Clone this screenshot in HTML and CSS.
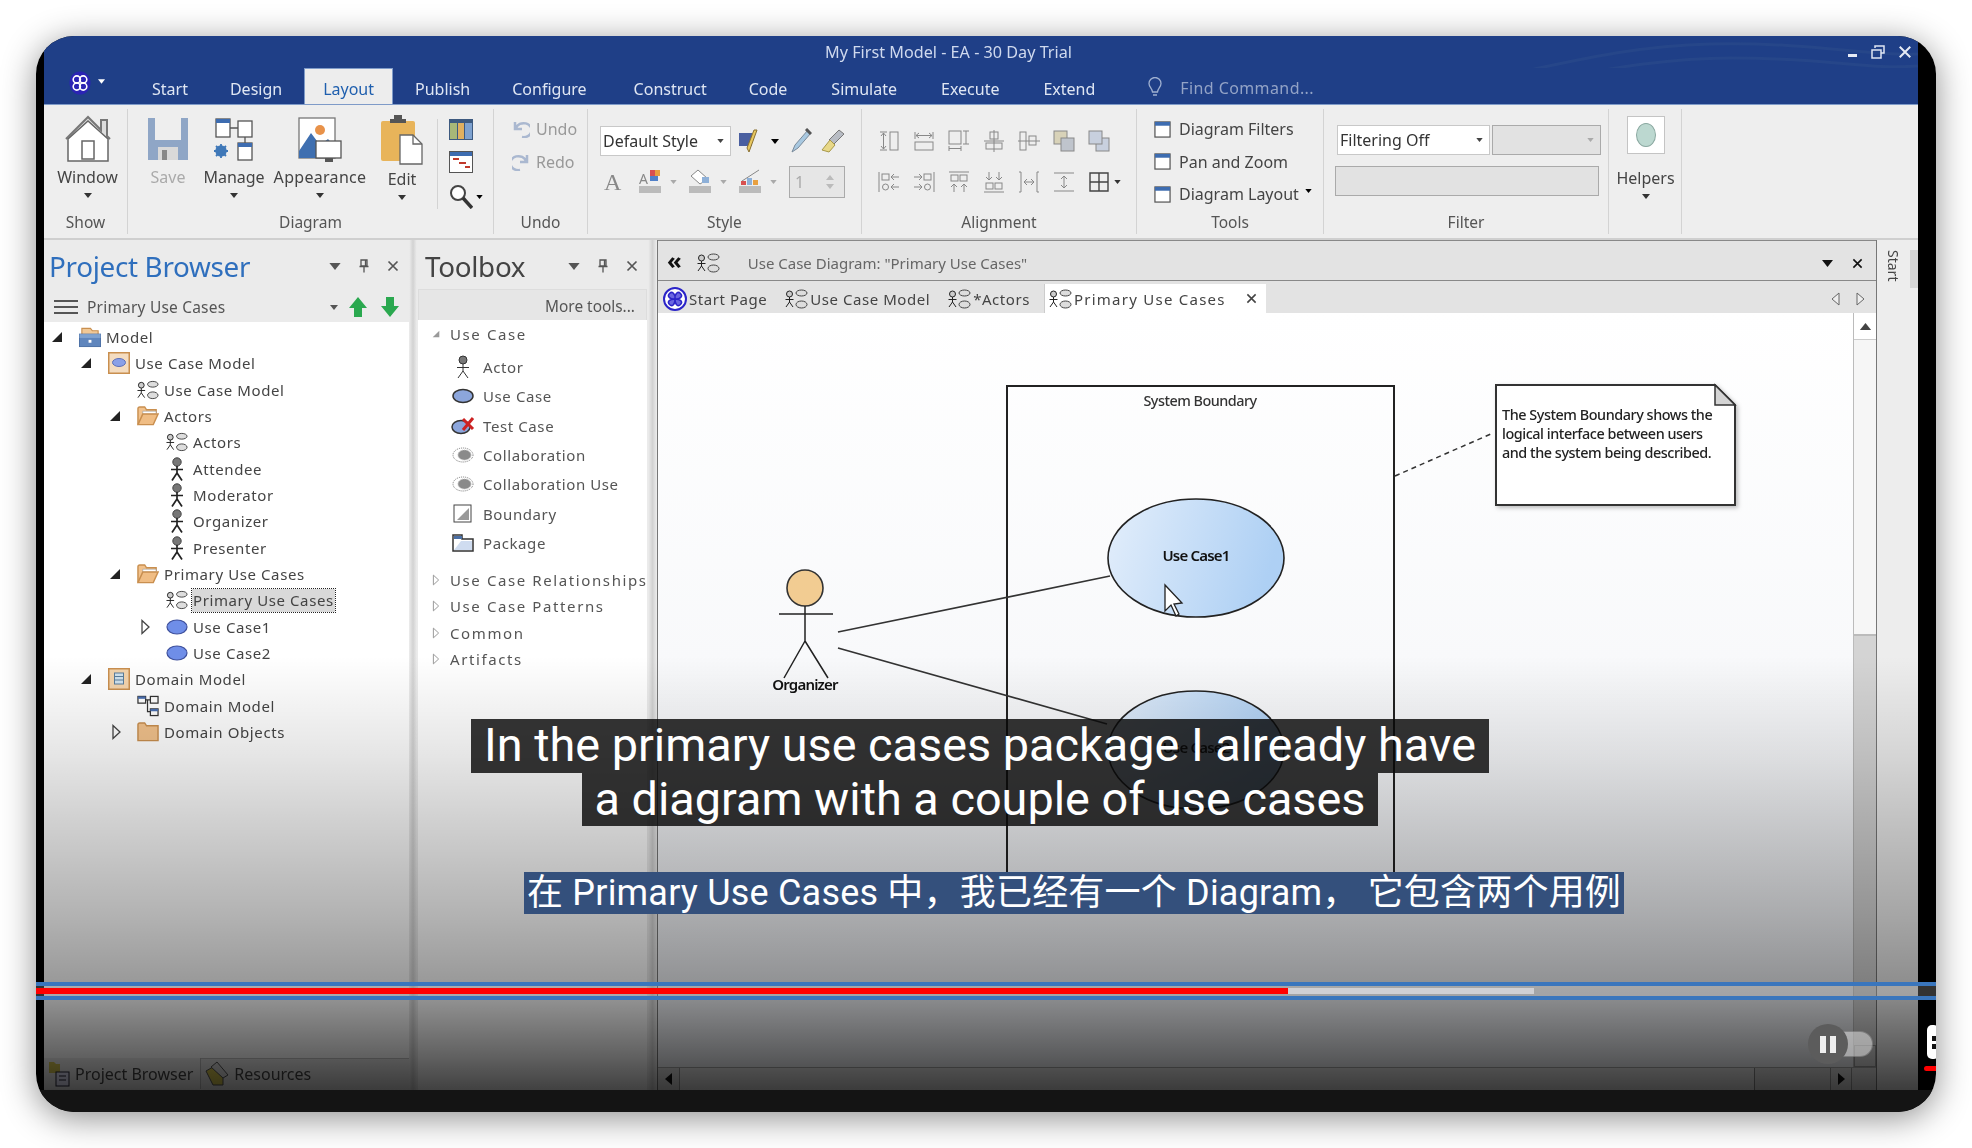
FILE: index.html
```html
<!DOCTYPE html>
<html lang="en">
<head>
    <meta charset="UTF-8">
    <title>My First Model - EA - 30 Day Trial</title>
    <link rel="stylesheet" href="styles.css">
</head>
<body>
<svg class="defs" width="0" height="0">
    <defs>
        <linearGradient id="ucfill" x1="0" x2="1" y1="0" y2="0.2">
            <stop offset="0" stop-color="#e3eefb"/>
            <stop offset="1" stop-color="#aed0f4"/>
        </linearGradient>
        <symbol id="i-actor" viewBox="0 0 14 24">
            <circle cx="7" cy="5" r="4.200" fill="#777" stroke="#444"/>
            <path d="M7 9V16M1 12.500H13M7 16L2 23.500M7 16L12 23.500" stroke="#222" stroke-width="1.700" fill="none"/>
        </symbol>
        <symbol id="i-actor-thin" viewBox="0 0 14 24">
            <circle cx="7" cy="5" r="4" fill="#777" stroke="#333"/>
            <path d="M7 9V16M1 12.500H13M7 16L2 23M7 16L12 23" stroke="#333" fill="none"/>
        </symbol>
        <symbol id="i-ucd" viewBox="0 0 23 20">
            <circle cx="4.500" cy="5" r="3" fill="#ccc" stroke="#222"/>
            <path d="M4.500 8V13M0.500 10.500H8.500M4.500 13L1 18M4.500 13L8 18" stroke="#222" fill="none"/>
            <ellipse cx="16.500" cy="4" rx="5.500" ry="3" fill="#ddd" stroke="#444"/>
            <ellipse cx="16.500" cy="15.500" rx="5.500" ry="3.500" fill="#ddd" stroke="#444"/>
        </symbol>
        <symbol id="i-open" viewBox="0 0 23 22">
            <path d="M1 20V3.500Q1 1.500 3 1.500H8L10 4.500H20V8" fill="#f2c28c" stroke="#c98f4f" stroke-width="1.500"/>
            <path d="M6 6H20V9H6z" fill="#fff" stroke="#999" stroke-width=".6"/>
            <path d="M1 20L6 9H22L17 20z" fill="#f0bd84" stroke="#c98f4f" stroke-width="1.500"/>
        </symbol>
        <symbol id="i-folder" viewBox="0 0 23 22">
            <path d="M1 20V3.500Q1 1.500 3 1.500H8L10 4.500H22V20z" fill="#f2c28c" stroke="#c98f4f" stroke-width="1.500"/>
        </symbol>
        <symbol id="i-model" viewBox="0 0 23 22">
            <path d="M3 8V2H12L14 4.500H20V8" fill="#f0c896" stroke="#c98f4f" stroke-width="1.200"/>
            <rect x="0.500" y="8" width="22" height="13" fill="#5f86bd" stroke="#4a6fa5"/>
            <rect x="0.500" y="8" width="22" height="4" fill="#7ea2d0"/>
            <rect x="10" y="14" width="3" height="3" fill="#fff"/>
        </symbol>
        <symbol id="i-pkg-uc" viewBox="0 0 22 22">
            <rect x="0.750" y="0.750" width="20.500" height="20.500" fill="#f4dcc0" stroke="#c98f4f" stroke-width="1.500"/>
            <ellipse cx="11" cy="10.500" rx="6.500" ry="4" fill="#8aa0e8" stroke="#5d70b8"/>
        </symbol>
        <symbol id="i-pkg-dm" viewBox="0 0 22 22">
            <rect x="0.750" y="0.750" width="20.500" height="20.500" fill="#f4d4ac" stroke="#c98f4f" stroke-width="1.500"/>
            <rect x="6.500" y="5" width="9" height="11" fill="#cfe2ee" stroke="#5a7d9a"/>
            <path d="M6.500 8.500H15.500M6.500 12H15.500" stroke="#5a7d9a"/>
        </symbol>
        <symbol id="i-dmd" viewBox="0 0 23 22">
            <rect x="1" y="1" width="8" height="7" fill="#fff" stroke="#333" stroke-width="1.300"/>
            <rect x="1" y="1" width="8" height="2.500" fill="#4a6fb0"/>
            <rect x="14" y="1" width="8" height="7" fill="#fff" stroke="#333" stroke-width="1.300"/>
            <rect x="14" y="14" width="8" height="7" fill="#fff" stroke="#333" stroke-width="1.300"/>
            <rect x="14" y="14" width="8" height="2.500" fill="#4a6fb0"/>
            <path d="M9 4.500H14M11 4.500V17H14" stroke="#333" fill="none" stroke-width="1.300"/>
        </symbol>
        <symbol id="i-uc" viewBox="0 0 22 16">
            <ellipse cx="11" cy="8" rx="10" ry="7" fill="#6f8ee8" stroke="#3d4f9c" stroke-width="1.200"/>
        </symbol>
        <symbol id="i-collab" viewBox="0 0 22 16">
            <ellipse cx="11" cy="8" rx="10" ry="7" fill="#fff" stroke="#777" stroke-dasharray="1 1"/>
            <ellipse cx="12.500" cy="8" rx="6.500" ry="5" fill="#8a8a8a" stroke="#bbb" stroke-dasharray="1 1"/>
        </symbol>
        <symbol id="i-win" viewBox="0 0 18 18">
            <rect x="1" y="1" width="16" height="16" fill="#fff" stroke="#555" stroke-width="1.300"/>
            <rect x="1" y="1" width="16" height="4" fill="#3d6cb0"/>
        </symbol>
        <symbol id="i-logo" viewBox="0 0 22 24">
            <ellipse cx="11" cy="12" rx="10.500" ry="11.500" fill="#2b24b4"/>
            <circle cx="7.800" cy="8.500" r="3.600" fill="none" stroke="#fff" stroke-width="1.600"/>
            <circle cx="14.200" cy="8.500" r="3.600" fill="none" stroke="#fff" stroke-width="1.600"/>
            <circle cx="7.800" cy="15.500" r="3.600" fill="none" stroke="#fff" stroke-width="1.600"/>
            <circle cx="14.200" cy="15.500" r="3.600" fill="none" stroke="#fff" stroke-width="1.600"/>
        </symbol>
        <symbol id="i-start" viewBox="0 0 24 24">
            <circle cx="12" cy="12" r="11" fill="#fff" stroke="#2b24c8" stroke-width="2"/>
            <path d="M12 12C6 12 4 9 6.500 6.500C9 4 12 6 12 12C12 6 15 4 17.500 6.500C20 9 18 12 12 12C18 12 20 15 17.500 17.500C15 20 12 18 12 12C12 18 9 20 6.500 17.500C4 15 6 12 12 12z" fill="#6a66e0" stroke="#2b24c8" stroke-width="1.500"/>
        </symbol>
        <symbol id="i-caret" viewBox="0 0 8 5">
            <path d="M0 0H8L4 5z"/>
        </symbol>
        <symbol id="i-open-tri" viewBox="0 0 12 12">
            <path d="M11 1V11H1z" fill="#222"/>
        </symbol>
        <symbol id="i-closed-tri" viewBox="0 0 10 16">
            <path d="M1.500 1.500L8.500 8L1.500 14.500z" fill="#fff" stroke="#444" stroke-width="1.300"/>
        </symbol>
        <symbol id="i-pin" viewBox="0 0 10 14">
            <path d="M2 1H8V7H2zM0.500 7.500H9.500M5 8V13.500M6.500 1V7" fill="none" stroke="currentColor" stroke-width="1.300"/>
        </symbol>
        <symbol id="i-x" viewBox="0 0 12 12">
            <path d="M1.500 1.500L10.500 10.500M10.500 1.500L1.500 10.500" stroke="currentColor" stroke-width="1.700"/>
        </symbol>
        <symbol id="al1" viewBox="0 0 22 22"><path d="M2 2H9M2 20H9M5.500 3V19M3 6L5.500 3L8 6M3 16L5.500 19L8 16" fill="none" stroke="#888"/><rect x="12" y="2" width="8" height="18" fill="none" stroke="#888"/></symbol>
        <symbol id="al2" viewBox="0 0 22 22"><path d="M2 2V9M20 2V9M3 5.500H19M6 3L3 5.500L6 8M16 3L19 5.500L16 8" fill="none" stroke="#888"/><rect x="2" y="12" width="18" height="8" fill="none" stroke="#888"/></symbol>
        <symbol id="al3" viewBox="0 0 22 22"><rect x="1" y="1" width="12" height="13" fill="none" stroke="#888"/><path d="M15 1H21M18 1V14M15 14H21M1 16V21M13 16V21M1 18.500H13" fill="none" stroke="#888"/></symbol>
        <symbol id="al4" viewBox="0 0 22 22"><rect x="7" y="2" width="8" height="7" fill="none" stroke="#888"/><rect x="3" y="13" width="16" height="6" fill="none" stroke="#888"/><path d="M1 11H21M11 0V22" fill="none" stroke="#888"/></symbol>
        <symbol id="al5" viewBox="0 0 22 22"><rect x="2" y="2" width="6" height="18" fill="none" stroke="#888"/><rect x="11" y="6" width="7" height="9" fill="none" stroke="#888"/><path d="M0 11H22" stroke="#888"/></symbol>
        <symbol id="al6" viewBox="0 0 22 22"><rect x="1" y="1" width="13" height="13" fill="#d8d2b8" stroke="#888"/><rect x="8" y="8" width="13" height="13" fill="#bfc4cc" stroke="#888"/></symbol>
        <symbol id="al7" viewBox="0 0 22 22"><rect x="8" y="8" width="13" height="13" fill="#c8d0de" stroke="#888"/><rect x="1" y="1" width="13" height="13" fill="#c8d0de" stroke="#888"/></symbol>
        <symbol id="al8" viewBox="0 0 22 22"><path d="M1 1V21" stroke="#888"/><rect x="4" y="3" width="7" height="6" fill="none" stroke="#888"/><circle cx="7.500" cy="16" r="3" fill="none" stroke="#888"/><path d="M21 6H13M16 3L13 6L16 9M21 16H13M16 13L13 16L16 19" fill="none" stroke="#888"/></symbol>
        <symbol id="al9" viewBox="0 0 22 22"><path d="M21 1V21" stroke="#888"/><rect x="11" y="3" width="7" height="6" fill="none" stroke="#888"/><circle cx="14.500" cy="16" r="3" fill="none" stroke="#888"/><path d="M1 6H9M6 3L9 6L6 9M1 16H9M6 13L9 16L6 19" fill="none" stroke="#888"/></symbol>
        <symbol id="al10" viewBox="0 0 22 22"><path d="M1 1H21" stroke="#888"/><rect x="3" y="4" width="7" height="6" fill="none" stroke="#888"/><rect x="12" y="4" width="7" height="6" fill="none" stroke="#888"/><path d="M6 21V13M3 16L6 13L9 16M16 21V13M13 16L16 13L19 16" fill="none" stroke="#888"/></symbol>
        <symbol id="al11" viewBox="0 0 22 22"><path d="M1 21H21" stroke="#888"/><rect x="3" y="12" width="7" height="6" fill="none" stroke="#888"/><rect x="12" y="12" width="7" height="6" fill="none" stroke="#888"/><path d="M6 1V9M3 6L6 9L9 6M16 1V9M13 6L16 9L19 6" fill="none" stroke="#888"/></symbol>
        <symbol id="al12" viewBox="0 0 22 22"><path d="M3 1V21M19 1V21M6 11H16M9 8L6 11L9 14M13 8L16 11L13 14M1 1H3M1 21H3M19 1H21M19 21H21" fill="none" stroke="#888"/></symbol>
        <symbol id="al13" viewBox="0 0 22 22"><path d="M1 2H21M1 20H21M11 5V17M8 8L11 5L14 8M8 14L11 17L14 14" fill="none" stroke="#888"/></symbol>
    </defs>
</svg>

<div class="frame">
    <div class="app">
        <div class="titlebar">
            <svg class="waves" viewBox="0 0 500 68" preserveAspectRatio="none">
                <path d="M0 60C120 40 200 10 300 8S450 20 500 18M0 66C140 50 220 22 320 22S450 34 500 30M60 68C180 52 240 36 340 36S450 46 500 44" fill="none" stroke="#264689" stroke-width="3"/>
            </svg>
            <span class="wintitle">My First Model - EA - 30 Day Trial</span>
            <span class="winbtn min"></span>
            <svg class="winbtn" width="14" height="14" viewBox="0 0 14 14"><path d="M4 3V1H13V8H10M1 5H10V13H1z" fill="none" stroke="#dfe6f3" stroke-width="1.500"/></svg>
            <svg class="winbtn last" width="14" height="14"><use href="#i-x" color="#e6ebf5"/></svg>
        </div>
        <div class="menu">
            <svg class="logo" width="22" height="24"><use href="#i-logo"/></svg>
            <svg class="logo-caret" width="7" height="5"><use href="#i-caret" fill="#fff"/></svg>
            <span class="tab">Start</span>
            <span class="tab">Design</span>
            <span class="tab active">Layout</span>
            <span class="tab">Publish</span>
            <span class="tab wide">Configure</span>
            <span class="tab">Construct</span>
            <span class="tab gap">Code</span>
            <span class="tab gap">Simulate</span>
            <span class="tab gap">Execute</span>
            <span class="tab">Extend</span>
            <svg class="bulb" width="14" height="20" viewBox="0 0 14 20"><path d="M4.500 15C4 11 1 10 1 6.500A6 6 0 0 1 13 6.500C13 10 10 11 9.500 15zM5 18H9" fill="none" stroke="#9fb0d0" stroke-width="1.300"/></svg>
            <span class="find">Find Command...</span>
        </div>

        <div class="ribbon">
            <div class="group g-show">
                <div class="bigs">
                    <div class="big b-window">
                        <svg width="46" height="48" viewBox="0 0 46 48">
                            <path d="M1 24L23 2L36 15V5H42V21L45 24" fill="#ddd" stroke="#777" stroke-width="2"/>
                            <path d="M3 24L23 6L43 24V46H3z" fill="#fff" stroke="#666" stroke-width="1.500"/>
                            <rect x="17" y="26" width="12" height="18" fill="#fff" stroke="#666" stroke-width="1.500"/>
                        </svg>
                        <span>Window</span>
                        <svg class="bc" width="8" height="5"><use href="#i-caret"/></svg>
                    </div>
                </div>
                <div class="glabel">Show</div>
            </div>
            <div class="group g-diagram">
                <div class="bigs">
                    <div class="big b-save dim">
                        <svg width="42" height="48" viewBox="0 0 42 48">
                            <path d="M1 3H41V45H1z" fill="#8fa6c6"/>
                            <rect x="8" y="3" width="26" height="22" fill="#eee"/>
                            <rect x="11" y="32" width="20" height="13" fill="#d9d9d9"/>
                            <rect x="15" y="35" width="5" height="10" fill="#888"/>
                        </svg>
                        <span>Save</span>
                    </div>
                    <div class="big b-manage">
                        <svg width="42" height="48" viewBox="0 0 42 48">
                            <rect x="3" y="4" width="14" height="18" fill="#fff" stroke="#555" stroke-width="1.300"/>
                            <rect x="3" y="4" width="14" height="4" fill="#3d6cb0"/>
                            <rect x="25" y="6" width="14" height="16" fill="#fff" stroke="#555" stroke-width="1.300"/>
                            <path d="M17 13H25M32 22V28" stroke="#555" stroke-width="1.300"/>
                            <rect x="25" y="28" width="14" height="17" fill="#fff" stroke="#555" stroke-width="1.300"/>
                            <rect x="25" y="28" width="14" height="4" fill="#3d6cb0"/>
                            <circle cx="8" cy="36" r="4" fill="none" stroke="#3f78b8" stroke-width="3.500"/>
                            <path d="M8 29V43M1 36H15M3 31L13 41M13 31L3 41" stroke="#3f78b8" stroke-width="1.800"/>
                        </svg>
                        <span>Manage</span>
                        <svg class="bc" width="8" height="5"><use href="#i-caret"/></svg>
                    </div>
                    <div class="big b-appear">
                        <svg width="44" height="48" viewBox="0 0 44 48">
                            <rect x="1" y="3" width="36" height="40" fill="#fff" stroke="#777" stroke-width="1.300"/>
                            <circle cx="22" cy="15" r="5" fill="#e8924a"/>
                            <path d="M1 36L13 18L22 30L30 24L37 32V43H1z" fill="#3f6fb0"/>
                            <rect x="18" y="26" width="25" height="17" fill="#fff" stroke="#555" stroke-width="1.300"/>
                            <path d="M27 43H35V47H27z" fill="#555"/>
                        </svg>
                        <span>Appearance</span>
                        <svg class="bc" width="8" height="5"><use href="#i-caret"/></svg>
                    </div>
                    <div class="big b-edit">
                        <svg width="44" height="50" viewBox="0 0 44 50">
                            <rect x="1" y="6" width="34" height="40" rx="2" fill="#e8b45a"/>
                            <path d="M10 8V4H14V0H22V4H26V8z" fill="#555"/>
                            <path d="M20 20H33L42 29V49H20z" fill="#fff" stroke="#666" stroke-width="1.300"/>
                            <path d="M33 20V29H42" fill="none" stroke="#666" stroke-width="1.300"/>
                        </svg>
                        <span>Edit</span>
                        <svg class="bc" width="8" height="5"><use href="#i-caret"/></svg>
                    </div>
                    <div class="minis">
                        <svg width="24" height="21" viewBox="0 0 24 21">
                            <rect width="24" height="21" fill="#3d5a80"/>
                            <rect x="1" y="4" width="7" height="16" fill="#a8b878"/>
                            <rect x="9" y="4" width="6" height="16" fill="#e0b060"/>
                            <rect x="16" y="4" width="7" height="16" fill="#7ea2d0"/>
                        </svg>
                        <svg width="24" height="22" viewBox="0 0 24 22">
                            <rect x=".5" y=".5" width="23" height="21" fill="#fff" stroke="#555"/>
                            <rect x="1" y="1" width="22" height="4" fill="#3d6cb0"/>
                            <path d="M4 8H10M10 12H17M16 16H21" stroke="#c0392b" stroke-width="2"/>
                        </svg>
                        <div class="zoomico">
                            <svg width="24" height="25" viewBox="0 0 24 25"><circle cx="9" cy="9" r="7" fill="#fff" stroke="#444" stroke-width="2"/><path d="M14 14L23 24" stroke="#333" stroke-width="3.500"/></svg>
                            <svg width="7" height="4"><use href="#i-caret"/></svg>
                        </div>
                    </div>
                </div>
                <div class="glabel">Diagram</div>
            </div>
            <div class="group g-undo">
                <div class="rows tall">
                    <div class="urow"><svg width="18" height="18" viewBox="0 0 18 18"><path d="M3 2V9H10M4 8A8 7 0 1 1 10 17" fill="none" stroke="#aab8d0" stroke-width="2.500"/></svg><span>Undo</span></div>
                    <div class="urow"><svg width="18" height="18" viewBox="0 0 18 18"><path d="M15 2V9H8M14 8A8 7 0 1 0 8 17" fill="none" stroke="#aab8d0" stroke-width="2.500"/></svg><span>Redo</span></div>
                </div>
                <div class="glabel">Undo</div>
            </div>
            <div class="group g-style">
                <div class="rows">
                    <div class="srow">
                        <div class="combo c-style"><span>Default Style</span><svg width="7" height="4"><use href="#i-caret"/></svg></div>
                        <svg width="22" height="26" viewBox="0 0 22 26"><rect x="1" y="5" width="13" height="13" fill="#4a5fa0"/><path d="M19 2L11 24L9 20L16 2z" fill="#e8c860" stroke="#8a7030"/></svg>
                        <svg class="tc" width="8" height="5"><use href="#i-caret"/></svg>
                        <svg class="tw" width="22" height="26" viewBox="0 0 22 26"><path d="M18 2L21 5L8 20L2 24L5 17z" fill="#a8c8e0" stroke="#7a8a9a"/><path d="M16 1L21 6" stroke="#555" stroke-width="3"/></svg>
                        <svg class="tw" width="24" height="26" viewBox="0 0 24 26"><path d="M18 2L23 6L13 16L8 12z" fill="#b8bcc4" stroke="#777"/><path d="M9 12L14 17L8 24L1 22z" fill="#e8d888" stroke="#a89848"/></svg>
                    </div>
                    <div class="srow second">
                        <span class="bigA">A</span>
                        <svg class="pa" width="22" height="26" viewBox="0 0 22 26"><text x="0" y="15" font-family="Noto Sans" font-size="14" fill="#888">A</text><rect x="11" y="1" width="5" height="6" fill="#d85050"/><rect x="16" y="1" width="5" height="6" fill="#e8a040"/><rect x="11" y="7" width="8" height="5" fill="#5080c8"/><rect y="17" width="22" height="7" fill="#bbb"/></svg>
                        <svg class="tc lite" width="7" height="4"><use href="#i-caret"/></svg>
                        <svg class="pa" width="22" height="26" viewBox="0 0 22 26"><path d="M9 1L19 10L11 15L2 7z" fill="#fff" stroke="#888"/><rect x="13" y="8" width="7" height="6" fill="#8eb0d8"/><rect y="17" width="22" height="7" fill="#bbb"/></svg>
                        <svg class="tc lite" width="7" height="4"><use href="#i-caret"/></svg>
                        <svg class="pa" width="22" height="26" viewBox="0 0 22 26"><path d="M3 12L20 1" stroke="#888"/><rect x="2" y="12" width="5" height="4" fill="#d85050"/><rect x="8" y="9" width="5" height="7" fill="#8eb0d8"/><rect x="14" y="11" width="5" height="5" fill="#e8a040"/><rect y="17" width="22" height="7" fill="#bbb"/></svg>
                        <svg class="tc lite" width="7" height="4"><use href="#i-caret"/></svg>
                        <div class="spin"><span>1</span><i class="up"></i><i class="down"></i></div>
                    </div>
                </div>
                <div class="glabel">Style</div>
            </div>
            <div class="group g-align">
                <div class="rows">
                    <div class="srow alrow">
                        <svg width="22" height="22"><use href="#al1"/></svg>
                        <svg width="22" height="22"><use href="#al2"/></svg>
                        <svg width="22" height="22"><use href="#al3"/></svg>
                        <svg width="22" height="22"><use href="#al4"/></svg>
                        <svg width="22" height="22"><use href="#al5"/></svg>
                        <svg width="22" height="22"><use href="#al6"/></svg>
                        <svg width="22" height="22"><use href="#al7"/></svg>
                    </div>
                    <div class="srow second alrow">
                        <svg width="22" height="22"><use href="#al8"/></svg>
                        <svg width="22" height="22"><use href="#al9"/></svg>
                        <svg width="22" height="22"><use href="#al10"/></svg>
                        <svg width="22" height="22"><use href="#al11"/></svg>
                        <svg width="22" height="22"><use href="#al12"/></svg>
                        <svg width="22" height="22"><use href="#al13"/></svg>
                        <div class="gridico">
                            <svg width="20" height="20" viewBox="0 0 20 20"><path d="M1 1H19V19H1zM10 1V19M1 10H19" fill="none" stroke="#444" stroke-width="1.400"/></svg>
                            <svg width="7" height="4"><use href="#i-caret"/></svg>
                        </div>
                    </div>
                </div>
                <div class="glabel">Alignment</div>
            </div>
            <div class="group g-tools">
                <div class="rows tall">
                    <div class="urow"><svg width="17" height="17"><use href="#i-win"/></svg><span>Diagram Filters</span></div>
                    <div class="urow"><svg width="17" height="17"><use href="#i-win"/></svg><span>Pan and Zoom</span></div>
                    <div class="urow"><svg width="17" height="17"><use href="#i-win"/></svg><span>Diagram Layout</span><svg class="lc" width="7" height="4"><use href="#i-caret"/></svg></div>
                </div>
                <div class="glabel">Tools</div>
            </div>
            <div class="group g-filter">
                <div class="rows">
                    <div class="srow">
                        <div class="combo c-filter"><span>Filtering Off</span><svg width="7" height="4"><use href="#i-caret"/></svg></div>
                        <div class="combo c-off"><svg width="7" height="4"><use href="#i-caret" fill="#aaa"/></svg></div>
                    </div>
                    <div class="srow second"><div class="combo c-text"></div></div>
                </div>
                <div class="glabel">Filter</div>
            </div>
            <div class="group g-help">
                <div class="big b-help">
                    <div class="helpbox"><i></i></div>
                    <span>Helpers</span>
                    <svg class="bc" width="8" height="5"><use href="#i-caret"/></svg>
                </div>
            </div>
        </div>

        <div class="work">
            <div class="panel browser">
                <div class="phead">
                    <span class="ptitle blue">Project Browser</span>
                    <svg class="pc" width="12" height="7"><use href="#i-caret" fill="#555"/></svg>
                    <svg class="pp" width="10" height="14"><use href="#i-pin" color="#555"/></svg>
                    <svg class="px" width="12" height="12"><use href="#i-x" color="#555"/></svg>
                </div>
                <div class="pbar">
                    <svg width="24" height="16" viewBox="0 0 24 16"><path d="M0 2H24M0 8H24M0 14H24" stroke="#555" stroke-width="2"/></svg>
                    <span class="crumb">Primary Use Cases</span>
                    <svg class="cc" width="8" height="5"><use href="#i-caret" fill="#555"/></svg>
                    <svg class="arrow" width="20" height="22" viewBox="0 0 20 22"><path d="M10 1L19 12H14V21H6V12H1z" fill="#2aa84f"/></svg>
                    <svg class="arrow" width="20" height="22" viewBox="0 0 20 22"><path d="M10 21L19 10H14V1H6V10H1z" fill="#2aa84f"/></svg>
                </div>
                <div class="tree">
                    <div class="row"><svg class="tri" width="12" height="12"><use href="#i-open-tri"/></svg><svg class="ic" width="22" height="22"><use href="#i-model"/></svg><span>Model</span></div>
                    <div class="row lv1"><svg class="tri" width="12" height="12"><use href="#i-open-tri"/></svg><svg class="ic" width="22" height="22"><use href="#i-pkg-uc"/></svg><span>Use Case Model</span></div>
                    <div class="row lv2"><i class="tri"></i><svg class="ic" width="22" height="20"><use href="#i-ucd"/></svg><span>Use Case Model</span></div>
                    <div class="row lv2"><svg class="tri" width="12" height="12"><use href="#i-open-tri"/></svg><svg class="ic" width="22" height="22"><use href="#i-open"/></svg><span>Actors</span></div>
                    <div class="row lv3"><i class="tri"></i><svg class="ic" width="22" height="20"><use href="#i-ucd"/></svg><span>Actors</span></div>
                    <div class="row lv3"><i class="tri"></i><svg class="ic" width="22" height="24"><use href="#i-actor"/></svg><span>Attendee</span></div>
                    <div class="row lv3"><i class="tri"></i><svg class="ic" width="22" height="24"><use href="#i-actor"/></svg><span>Moderator</span></div>
                    <div class="row lv3"><i class="tri"></i><svg class="ic" width="22" height="24"><use href="#i-actor"/></svg><span>Organizer</span></div>
                    <div class="row lv3"><i class="tri"></i><svg class="ic" width="22" height="24"><use href="#i-actor"/></svg><span>Presenter</span></div>
                    <div class="row lv2"><svg class="tri" width="12" height="12"><use href="#i-open-tri"/></svg><svg class="ic" width="22" height="22"><use href="#i-open"/></svg><span>Primary Use Cases</span></div>
                    <div class="row lv3"><i class="tri"></i><svg class="ic" width="22" height="20"><use href="#i-ucd"/></svg><span class="sel">Primary Use Cases</span></div>
                    <div class="row lv3"><svg class="tri cl" width="10" height="16"><use href="#i-closed-tri"/></svg><svg class="ic" width="22" height="16"><use href="#i-uc"/></svg><span>Use Case1</span></div>
                    <div class="row lv3"><i class="tri"></i><svg class="ic" width="22" height="16"><use href="#i-uc"/></svg><span>Use Case2</span></div>
                    <div class="row lv1"><svg class="tri" width="12" height="12"><use href="#i-open-tri"/></svg><svg class="ic" width="22" height="22"><use href="#i-pkg-dm"/></svg><span>Domain Model</span></div>
                    <div class="row lv2"><i class="tri"></i><svg class="ic" width="22" height="22"><use href="#i-dmd"/></svg><span>Domain Model</span></div>
                    <div class="row lv2"><svg class="tri cl" width="10" height="16"><use href="#i-closed-tri"/></svg><svg class="ic" width="22" height="22"><use href="#i-folder"/></svg><span>Domain Objects</span></div>
                </div>
                <div class="ptabs">
                    <div class="ptab on">
                        <svg width="22" height="26" viewBox="0 0 22 26"><path d="M1 1H6L8 3H12V12H1z" fill="#d8c850"/><rect x="8" y="11" width="13" height="14" fill="#e8e8ff" stroke="#223"/><path d="M11 15H18M11 19H18" stroke="#223"/></svg>
                        <span>Project Browser</span>
                    </div>
                    <div class="ptab">
                        <svg width="24" height="26" viewBox="0 0 24 26"><path d="M1 10L8 6L18 16V24H8z" fill="#d8c850" stroke="#555"/><path d="M6 6L12 1L23 14L18 17z" fill="#ddd" stroke="#555"/></svg>
                        <span>Resources</span>
                    </div>
                </div>
            </div>
            <div class="split"></div>
            <div class="panel toolbox">
                <div class="phead">
                    <span class="ptitle">Toolbox</span>
                    <svg class="pc" width="12" height="7"><use href="#i-caret" fill="#555"/></svg>
                    <svg class="pp" width="10" height="14"><use href="#i-pin" color="#555"/></svg>
                    <svg class="px" width="12" height="12"><use href="#i-x" color="#555"/></svg>
                </div>
                <div class="tbar">More tools...</div>
                <div class="tools">
                    <div class="thead"><svg class="tt" width="8" height="8"><use href="#i-open-tri" opacity=".45"/></svg><span>Use Case</span></div>
                    <div class="titem"><svg width="20" height="24"><use href="#i-actor-thin"/></svg><span>Actor</span></div>
                    <div class="titem"><svg width="22" height="16" viewBox="0 0 22 16"><ellipse cx="11" cy="8" rx="10" ry="6.500" fill="#8ca6dc" stroke="#333" stroke-width="1.500"/></svg><span>Use Case</span></div>
                    <div class="titem"><svg width="24" height="18" viewBox="0 0 24 18"><ellipse cx="10" cy="10" rx="9" ry="6.500" fill="#8ca6dc" stroke="#333" stroke-width="1.500"/><path d="M12 2L22 12M22 1L12 13" stroke="#c22" stroke-width="3"/></svg><span>Test Case</span></div>
                    <div class="titem"><svg width="22" height="16"><use href="#i-collab"/></svg><span>Collaboration</span></div>
                    <div class="titem"><svg width="22" height="16"><use href="#i-collab"/></svg><span>Collaboration Use</span></div>
                    <div class="titem"><svg width="20" height="20" viewBox="0 0 20 20"><rect x="1" y="1" width="17" height="17" fill="#fff" stroke="#444"/><path d="M4 16L16 4V16z" fill="#999"/></svg><span>Boundary</span></div>
                    <div class="titem"><svg width="22" height="18" viewBox="0 0 22 18"><path d="M1 1H10V5H21V17H1z" fill="#fff" stroke="#333" stroke-width="1.500"/><rect x="2" y="2" width="8" height="3" fill="#4a6fa5"/><path d="M2 16L9 7H20V16z" fill="#cfdcf0"/></svg><span>Package</span></div>
                    <div class="tgroup">
                        <div class="thead"><svg class="tt" width="8" height="12"><use href="#i-closed-tri" opacity=".55"/></svg><span>Use Case Relationships</span></div>
                        <div class="thead"><svg class="tt" width="8" height="12"><use href="#i-closed-tri" opacity=".55"/></svg><span>Use Case Patterns</span></div>
                        <div class="thead"><svg class="tt" width="8" height="12"><use href="#i-closed-tri" opacity=".55"/></svg><span>Common</span></div>
                        <div class="thead"><svg class="tt" width="8" height="12"><use href="#i-closed-tri" opacity=".55"/></svg><span>Artifacts</span></div>
                    </div>
                </div>
            </div>
            <div class="split"></div>
            <div class="doc">
                <div class="dhead">
                    <span class="dbl">«</span>
                    <svg width="23" height="20"><use href="#i-ucd"/></svg>
                    <span class="dtitle">Use Case Diagram: "Primary Use Cases"</span>
                    <svg class="dcaret" width="11" height="7"><use href="#i-caret" fill="#111"/></svg>
                    <svg class="dx" width="11" height="11"><use href="#i-x" color="#111"/></svg>
                </div>
                <div class="dtabs">
                    <span class="dtab dt1"><svg width="24" height="24"><use href="#i-start"/></svg>Start Page</span>
                    <span class="dtab"><svg width="23" height="20"><use href="#i-ucd"/></svg>Use Case Model</span>
                    <span class="dtab"><svg width="23" height="20"><use href="#i-ucd"/></svg>*Actors</span>
                    <span class="dtab on"><svg width="23" height="20"><use href="#i-ucd"/></svg>Primary Use Cases<svg class="tabx" width="11" height="11"><use href="#i-x" color="#444"/></svg></span>
                    <svg class="nav" width="9" height="14" viewBox="0 0 9 14"><path d="M8 1L1 7L8 13z" fill="#eee" stroke="#666"/></svg>
                    <svg class="nav" width="9" height="14" viewBox="0 0 9 14"><path d="M1 1L8 7L1 13z" fill="#eee" stroke="#666"/></svg>
                </div>
                <div class="dbody">
                    <div class="canvas">
                        <div class="boundary"></div>
                        <svg class="lines" width="1196" height="753" viewBox="0 0 1196 753">
                            <g transform="translate(-1 1)">
                                <text x="543" y="92" text-anchor="middle" class="bname">System Boundary</text>
                                <ellipse cx="539" cy="244" rx="88" ry="59" fill="url(#ucfill)" stroke="#222" stroke-width="1.600"/>
                                <ellipse cx="539" cy="436" rx="88" ry="59" fill="url(#ucfill)" stroke="#222" stroke-width="1.600"/>
                                <text x="539" y="247" text-anchor="middle" class="ucname">Use Case1</text>
                                <text x="539" y="439" text-anchor="middle" class="ucname">Use Case2</text>
                                <path d="M181 318L453 262M181 334L450 410" stroke="#333" stroke-width="1.700"/>
                                <path d="M738 162L836 119" stroke="#333" stroke-width="1.500" stroke-dasharray="5 4"/>
                                <circle cx="148" cy="274" r="18" fill="#f2cc92" stroke="#333" stroke-width="1.600"/>
                                <path d="M122 300H176M148 292V327M148 327L127 364M148 327L171 364" stroke="#222" stroke-width="1.500" fill="none"/>
                                <text x="148" y="376" text-anchor="middle" class="ucname">Organizer</text>
                                <path d="M508 271V297L514 291L519 302L522 300L517 290L525 289z" fill="#fff" stroke="#222" stroke-width="1.300"/>
                            </g>
                            <path class="noteshape" d="M838 72H1057L1077 92V192H838z" fill="#fff" stroke="#333" stroke-width="2"/>
                            <path d="M1057 72V92H1077z" fill="#d4d4d4" stroke="#333" stroke-width="1.500"/>
                        </svg>
                        <div class="note">The System Boundary shows the logical interface between users and the system being described.</div>
                    </div>
                    <div class="vscroll">
                        <div class="vbtn"><svg width="13" height="7" viewBox="0 0 8 5"><path d="M0 5H8L4 0z" fill="#444"/></svg></div>
                        <div class="vthumb"></div>
                        <div class="vdown"></div>
                    </div>
                </div>
                <div class="hscroll">
                    <div class="hbtn"><svg width="7" height="12" viewBox="0 0 7 12"><path d="M7 0V12L0 6z" fill="#111"/></svg></div>
                    <div class="hthumb"></div>
                    <div class="hbtn right"><svg width="7" height="12" viewBox="0 0 7 12"><path d="M0 0V12L7 6z" fill="#111"/></svg></div>
                </div>
            </div>
            <div class="strip"><span>Start</span><i></i></div>
        </div>
        <div class="shade"></div>
    </div>

    <div class="footer"></div>

    <div class="progress">
        <div class="pline"></div>
        <div class="pband"><i class="played"></i><i class="buffered"></i></div>
        <div class="pline"></div>
    </div>

    <div class="captions">
        <div class="cap">In the primary use cases package I already have</div>
        <div class="cap">a diagram with a couple of use cases</div>
    </div>
    <div class="cap-zh">在 Primary Use Cases 中，我已经有一个 Diagram， 它包含两个用例</div>

    <div class="pausewrap">
        <div class="pill"></div>
        <div class="pause"><i></i><i></i></div>
    </div>
    <div class="yt"><i></i><i></i></div>
    <div class="ytbar"></div>
</div>
</body>
</html>
```

FILE: styles.css
```css
body {
    margin: 0;
    background: #fff;
    font-family: "Noto Sans", "Open Sans", sans-serif;
    color: #333;
    overflow: hidden;
}
.defs {
    position: absolute;
}
.frame {
    position: relative;
    width: 1900px;
    height: 1076px;
    margin: 36px 0 0 36px;
    background: #000;
    border-radius: 38px;
    overflow: hidden;
}
body::before {
    content: "";
    position: absolute;
    left: 36px;
    top: 36px;
    width: 1900px;
    height: 1076px;
    border-radius: 38px;
    box-shadow: 0 6px 34px rgba(0, 0, 0, 0.45);
}
.app {
    position: relative;
    margin-left: 8px;
    width: 1874px;
    height: 1054px;
    display: flex;
    flex-direction: column;
    background: #ededed;
    filter: blur(0.5px);
    overflow: hidden;
}
.footer {
    height: 22px;
    background: #141414;
    position: relative;
}

/* title + menu */
.titlebar {
    position: relative;
    height: 32px;
    background: #1f3f87;
    display: flex;
    align-items: center;
    justify-content: flex-end;
    padding-right: 6px;
}
.waves {
    position: absolute;
    right: 0;
    top: 0;
    width: 520px;
    height: 68px;
}
.wintitle {
    position: relative;
    margin-right: auto;
    margin-left: 781px;
    color: #cfd9ee;
    font-size: 16.2px;
}
.winbtn {
    position: relative;
    margin-left: 14px;
}
.winbtn.min {
    width: 9px;
    height: 3px;
    background: #e6ebf5;
    margin-top: 6px;
    margin-right: 0;
}
.winbtn.last {
    margin-left: 13px;
}
.menu {
    position: relative;
    height: 36px;
    display: flex;
    align-items: center;
    background: #1f3f87;
    border-bottom: 1px solid #7f9bc8;
    padding-left: 25px;
    color: #dfe6f3;
    font-size: 16px;
}
.logo {
    margin-top: -7px;
}
.logo-caret {
    margin: -10px 0 0 7px;
}
.tab {
    padding: 6px 21px 0;
    height: 36px;
    box-sizing: border-box;
    line-height: 31px;
}
.tab:first-of-type {
    margin-left: 26px;
}
.tab.wide {
    margin-right: 5px;
}
.tab.gap {
    margin-right: 2px;
}
.tab.active {
    background: #ededed;
    color: #1f5fae;
    padding: 6px 18px 0;
    margin: 0 1px;
    border: 1px solid #7f9bc8;
    border-bottom: 0;
    line-height: 29px;
}
.bulb {
    margin: 1px 0 0 32px;
}
.find {
    margin-left: 18px;
    color: #93a3c6;
    letter-spacing: 0.4px;
    padding-top: 3px;
}

/* ribbon */
.ribbon {
    height: 135px;
    display: flex;
    background: #eeeeee;
    border-bottom: 2px solid #cfcfcf;
    box-sizing: border-box;
    font-size: 16px;
    color: #444;
}
.group {
    display: flex;
    flex-direction: column;
    box-sizing: border-box;
    border-right: 1px solid #d3d3d3;
    margin: 4px 0 4px;
}
.g-show { width: 84px; }
.g-diagram { width: 366px; }
.g-undo { width: 94px; }
.g-style { width: 274px; }
.g-align { width: 275px; }
.g-tools { width: 187px; }
.g-filter { width: 285px; }
.g-help { width: 73px; }
.glabel {
    height: 28px;
    flex: none;
    line-height: 32px;
    text-align: center;
    color: #555;
    font-size: 15.5px;
}
.bigs {
    height: 97px;
    flex: none;
    display: flex;
    padding-top: 6px;
    box-sizing: border-box;
}
.g-show .bigs {
    padding-left: 4px;
}
.g-diagram .bigs {
    padding-left: 10px;
}
.big {
    display: flex;
    flex-direction: column;
    align-items: center;
    width: 80px;
}
.big span {
    margin-top: 3px;
    line-height: 22px;
}
.b-save { width: 60px; }
.b-manage { width: 72px; }
.b-appear { width: 100px; }
.b-edit { width: 64px; }
.big.b-appear span {
    letter-spacing: 0.3px;
}
.dim {
    color: #aaa;
}
.bc {
    margin-top: 5px;
    fill: #333;
}
.minis {
    margin-left: 3px;
    padding-left: 11px;
    border-left: 1px solid #d3d3d3;
    height: 90px;
    display: flex;
    flex-direction: column;
    gap: 11px;
    margin-top: 4px;
}
.zoomico {
    display: flex;
    align-items: center;
    gap: 3px;
}
.rows {
    height: 97px;
    flex: none;
    padding-top: 17px;
    box-sizing: border-box;
}
.tall {
    padding-top: 4px;
}
.urow {
    display: flex;
    align-items: center;
    height: 32.5px;
    gap: 6px;
}
.g-undo .rows { padding-left: 18px; }
.g-undo .urow { color: #999; }
.g-tools .rows { padding-left: 17px; }
.g-tools .urow { gap: 8px; }
.lc {
    margin: -6px 0 0 -2px;
}
.srow {
    display: flex;
    align-items: center;
    height: 30px;
}
.second {
    margin-top: 11px;
}
.g-filter .rows { padding-top: 16px; }
.g-style .srow { padding-left: 12px; }
.g-align .srow { padding-left: 16px; gap: 13px; }
.g-filter .srow { padding-left: 13px; }
.combo {
    box-sizing: border-box;
    height: 30px;
    display: flex;
    align-items: center;
    justify-content: space-between;
    background: #fff;
    border: 1px solid #c8c8c8;
    padding: 0 6px 0 2px;
    color: #333;
}
.combo svg {
    fill: #444;
}
.c-style { width: 131px; margin-right: 7px; }
.c-filter { width: 153px; margin-right: 2px; }
.c-off {
    width: 109px;
    background: #e2e2e2;
    border: 1px solid #aaa;
    justify-content: flex-end;
}
.c-text {
    width: 264px;
    margin-left: -2px;
    background: #e2e2e2;
    border: 1px solid #aaa;
}
.tc {
    margin: 0 11px 0 11px;
}
.tw {
    margin-right: 9px;
}
.tc.lite {
    margin: 0 12px 0 9px;
    fill: #aaa;
}
.bigA {
    font-family: "Liberation Serif", serif;
    font-size: 24px;
    color: #888;
    width: 35px;
    margin-left: 4px;
    margin-right: 0;
}
.pa {
    margin-left: 0;
    overflow: visible;
}
.spin {
    position: relative;
    width: 56px;
    height: 32px;
    box-sizing: border-box;
    border: 1px solid #aaa;
    background: #e6e6e6;
    color: #aaa;
    padding-left: 5px;
    line-height: 30px;
    margin-left: 0;
}
.spin i {
    position: absolute;
    right: 10px;
    width: 0;
    height: 0;
    border-left: 4px solid transparent;
    border-right: 4px solid transparent;
}
.spin .up {
    top: 8px;
    border-bottom: 5px solid #bbb;
}
.spin .down {
    bottom: 8px;
    border-top: 5px solid #bbb;
}
.gridico {
    display: flex;
    align-items: center;
    gap: 5px;
    margin-left: 1px;
}
.gridico svg:last-child {
    fill: #333;
}
.b-help {
    width: 73px;
    padding-top: 7px;
}
.helpbox {
    box-sizing: border-box;
    width: 38px;
    height: 38px;
    background: #fff;
    border: 1px solid #c4c4c4;
    display: flex;
    align-items: center;
    justify-content: center;
}
.helpbox i {
    width: 18px;
    height: 22px;
    border-radius: 50%;
    background: #bcd8d0;
    border: 1px solid #8aa8a0;
}
.b-help span {
    margin-top: 13px;
}

/* panels */
.work {
    flex: 1;
    display: flex;
    min-height: 0;
    background: #e3e3e3;
}
.panel {
    display: flex;
    flex-direction: column;
    background: #ebebeb;
}
.browser { width: 365px; }
.toolbox { width: 231px; }
.split {
    width: 8px;
    background: linear-gradient(to right, #ededed, #d2d2d2 50%, #ededed);
}
.split + .toolbox + .split {
    width: 9px;
}
.phead {
    height: 49px;
    flex: none;
    display: flex;
    align-items: center;
    padding: 2px 8px 0 5px;
    box-sizing: border-box;
}
.ptitle {
    flex: 1;
    font-size: 27.8px;
    color: #444;
    letter-spacing: -0.3px;
}
.toolbox .ptitle {
    padding-left: 3px;
}
.blue {
    color: #2f6fbd;
}
.pc { margin-right: 18px; margin-top: 2px; }
.pp { margin-right: 18px; }
.px { margin-right: 2px; }
.pbar {
    height: 33px;
    flex: none;
    display: flex;
    align-items: center;
    padding: 3px 9px 0 10px;
    box-sizing: border-box;
    font-size: 15.5px;
}
.crumb {
    flex: 1;
    margin-left: 9px;
    color: #555;
    letter-spacing: 0.2px;
}
.cc {
    margin-right: -2px;
}
.arrow {
    margin-left: 12px;
}
.tree {
    flex: 1;
    background: #fff;
    padding-top: 2px;
    font-size: 15px;
    letter-spacing: 0.6px;
    color: #444;
}
.row {
    height: 26.33px;
    display: flex;
    align-items: center;
    padding-left: 4px;
}
.row.lv1 { padding-left: 33px; }
.row.lv2 { padding-left: 62px; }
.row.lv3 { padding-left: 91px; }
.tri {
    width: 18px;
    flex: none;
}
.tri.cl {
    padding-left: 3px;
    box-sizing: border-box;
}
.ic {
    width: 22px;
    flex: none;
    margin: 0 5px 0 13px;
}
.sel {
    background: #d9d9d9;
    outline: 1px dotted #222;
    margin-left: -1px;
    padding: 0 1px;
    line-height: 23px;
}
.ptabs {
    height: 32px;
    flex: none;
    display: flex;
    background: #e8e8e8;
    font-size: 16px;
    color: #444;
    border-top: 1px solid #c4c4c4;
    box-sizing: border-box;
    padding-bottom: 1px;
}
.ptab {
    display: flex;
    align-items: center;
    padding: 0 7px 0 4px;
    gap: 5px;
}
.ptab.on {
    background: #efefef;
    border-right: 1px solid #bbb;
    margin-top: -1px;
}

/* toolbox */
.tbar {
    height: 30px;
    flex: none;
    margin: 0 1px;
    line-height: 33px;
    text-align: right;
    padding-right: 11px;
    font-size: 15.4px;
    background: #e6e6e6;
    color: #555;
    border: 1px solid #ddd;
    border-bottom: 0;
}
.tools {
    flex: 1;
    background: #fff;
    margin: 0 1px;
    overflow: hidden;
    font-size: 15px;
    letter-spacing: 0.6px;
    color: #555;
    padding-top: 1px;
    white-space: nowrap;
}
.thead {
    height: 26.5px;
    display: flex;
    align-items: center;
    padding-left: 14px;
    letter-spacing: 1.6px;
}
.tt {
    width: 8px;
    flex: none;
    margin-right: 10px;
}
.titem {
    height: 29.3px;
    display: flex;
    align-items: center;
    padding-left: 33px;
    position: relative;
    top: 5px;
}
.titem svg {
    width: 24px;
    flex: none;
    margin-right: 8px;
}
.tgroup {
    margin-top: 14px;
}

/* document */
.doc {
    width: 1220px;
    flex: none;
    display: flex;
    flex-direction: column;
    border-left: 1px solid #777;
    border-right: 1px solid #777;
    box-sizing: border-box;
    background: #e3e3e3;
}
.dhead {
    height: 41px;
    flex: none;
    display: flex;
    align-items: center;
    border-top: 1px solid #888;
    border-bottom: 1px solid #888;
    box-sizing: border-box;
    padding: 5px 13px 0 9px;
    font-size: 15px;
    color: #666;
}
.dbl {
    font-size: 24px;
    font-weight: bold;
    color: #111;
    margin: -6px 15px 0 0;
    line-height: 24px;
}
.dtitle {
    flex: 1;
    margin-left: 28px;
}
.dcaret {
    margin-right: 19px;
}
.dtabs {
    height: 32px;
    flex: none;
    display: flex;
    align-items: center;
    font-size: 15px;
    color: #444;
    padding: 3px 11px 0 5px;
    box-sizing: border-box;
    letter-spacing: 0.55px;
}
.dtab {
    display: flex;
    align-items: center;
    gap: 2px;
    margin-right: 18px;
    height: 29px;
}
.dtab.on {
    background: #fff;
    margin-right: auto;
    margin-left: -4px;
    padding: 0 9px 0 4px;
    letter-spacing: 1.25px;
    border-left: 1px solid #ccc;
}
.tabx {
    margin-left: 18px;
}
.nav {
    margin-left: 16px;
}
.dbody {
    flex: 1;
    display: flex;
    min-height: 0;
}
.canvas {
    position: relative;
    flex: 1;
    background: linear-gradient(#fff, #f0f2f6);
    overflow: hidden;
}
.boundary {
    position: absolute;
    left: 348px;
    top: 72px;
    width: 389px;
    height: 520px;
    box-sizing: border-box;
    border: 2px solid #222;
}
.lines {
    position: absolute;
    left: 0;
    top: 0;
}
.noteshape {
    filter: drop-shadow(2px 2px 2px rgba(0, 0, 0, 0.25));
}
.bname {
    font-size: 14.4px;
    font-family: "Noto Sans", sans-serif;
    letter-spacing: -0.5px;
    fill: #333;
    font-weight: 500;
}
.ucname {
    font-size: 15px;
    font-family: "Noto Sans", sans-serif;
    letter-spacing: -0.8px;
    font-weight: 600;
    fill: #111;
}
.note {
    position: absolute;
    left: 838px;
    top: 72px;
    width: 239px;
    height: 120px;
    box-sizing: border-box;
    padding: 20px 8px 0 6px;
    font-size: 14.4px;
    line-height: 19px;
    letter-spacing: -0.45px;
    color: #222;
    font-weight: 500;
}
.vscroll {
    width: 23px;
    flex: none;
    display: flex;
    flex-direction: column;
    background: #d4d4d4;
    border-left: 1px solid #bbb;
    box-sizing: border-box;
}
.vbtn {
    height: 27px;
    flex: none;
    background: #fff;
    display: flex;
    align-items: center;
    justify-content: center;
    border-bottom: 1px solid #ccc;
    box-sizing: border-box;
}
.vthumb {
    height: 294px;
    flex: none;
    background: #f6f6f6;
    border-bottom: 2px solid #bbb;
}
.vdown {
    margin-top: auto;
    height: 22px;
    border: 1px solid #999;
    box-sizing: border-box;
}
.hscroll {
    height: 23px;
    flex: none;
    display: flex;
    align-items: center;
    padding-right: 24px;
    background: #ddd;
    border-top: 1px solid #aaa;
    box-sizing: border-box;
}
.hbtn {
    width: 22px;
    height: 22px;
    display: flex;
    align-items: center;
    justify-content: center;
    border-right: 1px solid #999;
    box-sizing: border-box;
}
.hbtn.right {
    margin-left: auto;
    border-left: 1px solid #999;
    border-right: 1px solid #999;
}
.hthumb {
    width: 1074px;
    height: 22px;
    border-right: 1px solid #888;
    background: #e8e8e8;
}
.strip {
    flex: 1;
    display: flex;
    justify-content: space-between;
    background: #ededed;
    padding-top: 10px;
    font-size: 14px;
    color: #444;
}
.strip span {
    writing-mode: vertical-rl;
    margin-left: 7px;
    height: 36px;
}
.strip i {
    width: 8px;
    height: 38px;
    background: #d6d6d6;
}
.shade {
    position: absolute;
    left: 0;
    right: 0;
    top: 0;
    bottom: 0;
    background: linear-gradient(transparent 620px, rgba(0, 0, 0, 0.1) 720px, rgba(0, 0, 0, 0.3) 880px, rgba(0, 0, 0, 0.42) 960px, rgba(0, 0, 0, 0.62) 1020px, rgba(0, 0, 0, 0.74) 1053px);
    pointer-events: none;
}

/* player overlays */
.progress {
    position: absolute;
    left: 0;
    right: 0;
    top: 946px;
}
.pline {
    height: 4px;
    background: #3a76bd;
}
.pband {
    position: relative;
    height: 10px;
    background: rgba(255, 255, 255, 0.2);
    display: flex;
    align-items: center;
}
.played {
    width: 1252px;
    height: 6px;
    background: #f00;
}
.buffered {
    width: 246px;
    height: 6px;
    background: #d0d0d4;
}
.captions {
    position: absolute;
    left: 0;
    width: 1888px;
    top: 683px;
    display: flex;
    flex-direction: column;
    align-items: center;
}
.cap {
    height: 53.5px;
    line-height: 53px;
    padding: 0 13px;
    background: rgba(8, 8, 8, 0.82);
    color: #fff;
    font-family: Roboto, sans-serif;
    font-size: 46.8px;
    white-space: nowrap;
}
.cap-zh {
    position: absolute;
    left: 488px;
    top: 836px;
    height: 42px;
    line-height: 42px;
    padding: 0 3px;
    background: #34507c;
    color: #fff;
    font-family: Roboto, "Noto Sans CJK SC", sans-serif;
    font-size: 36px;
    letter-spacing: 0.2px;
    white-space: nowrap;
}
.pausewrap {
    position: absolute;
    left: 1772px;
    top: 988px;
    width: 68px;
    height: 40px;
}
.pill {
    position: absolute;
    left: 18px;
    top: 7px;
    width: 47px;
    height: 26px;
    border-radius: 13px;
    background: rgba(255, 255, 255, 0.45);
    border: 1px solid rgba(0, 0, 0, 0.25);
    box-sizing: border-box;
}
.pause {
    position: absolute;
    left: 0;
    top: 0;
    width: 40px;
    height: 40px;
    border-radius: 50%;
    background: #5c5c5c;
    display: flex;
    align-items: center;
    justify-content: center;
    gap: 4px;
}
.pause i {
    width: 6px;
    height: 17px;
    background: #eee;
}
.yt {
    position: absolute;
    left: 1891px;
    top: 989px;
    width: 12px;
    height: 34px;
    border-radius: 5px;
    background: #fff;
    display: flex;
    flex-direction: column;
    justify-content: center;
    gap: 3px;
    padding-left: 5px;
    box-sizing: border-box;
}
.yt i {
    height: 5px;
    background: #111;
}
.ytbar {
    position: absolute;
    left: 1888px;
    top: 1030px;
    width: 16px;
    height: 5px;
    border-radius: 3px;
    background: #f00;
}
```
